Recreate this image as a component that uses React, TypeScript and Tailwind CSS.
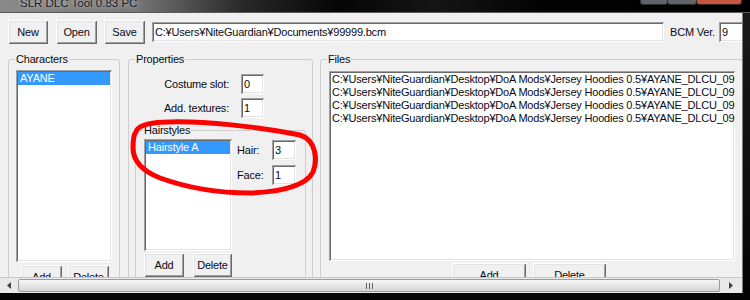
import React from 'react';

const raised =
    'shadow-[inset_1px_1px_0_#ffffff,inset_-1px_-1px_0_#696969,inset_2px_2px_0_#e3e3e3,inset_-2px_-2px_0_#a0a0a0]';
const sunken =
    'shadow-[inset_1px_1px_0_#a0a0a0,inset_-1px_-1px_0_#ffffff,inset_2px_2px_0_#696969,inset_-2px_-2px_0_#e3e3e3]';

const filePath =
    'C:¥Users¥NiteGuardian¥Desktop¥DoA Mods¥Jersey Hoodies 0.5¥AYANE_DLCU_099_COS_HAIR';

function Btn({ label, className }: { label: string; className: string }) {
    return (
        <div
            className={`${raised} ${className} h-[24px] shrink-0 flex items-center justify-center bg-[#f0f0f0]`}
        >
            {label}
        </div>
    );
}

function Field({ value, className }: { value: string; className: string }) {
    return (
        <div
            className={`${sunken} ${className} h-[20px] shrink-0 flex items-center pl-[3px] bg-white overflow-hidden whitespace-nowrap`}
        >
            {value}
        </div>
    );
}

function ListBox({
    className,
    children,
}: {
    className: string;
    children: React.ReactNode;
}) {
    return (
        <div className={`${sunken} ${className} shrink-0 p-[2px] bg-white overflow-hidden`}>
            {children}
        </div>
    );
}

function Selected({ label }: { label: string }) {
    return (
        <div className="h-[13px] leading-[13px] pl-[2px] bg-[#3399ff] text-white whitespace-nowrap">
            {label}
        </div>
    );
}

function TitleBar() {
    return (
        <div className="h-[13px] flex items-start border-b border-[#5a5a5a] bg-[linear-gradient(90deg,#8a8a8a_0%,#777777_18%,#2a2a2a_32%,#050505_45%,#151515_58%,#030303_72%,#000000_100%)]">
            <span className="ml-[20px] mt-[-3px] leading-[13px] text-[11.5px] tracking-normal text-[#1b1b2a] [text-shadow:0_0_4px_#d8d8d8]">
                SLR DLC Tool 0.83 PC
            </span>
            <div className="ml-auto mr-[8px] flex">
                <div className="w-[28px] h-[5px] border border-t-0 border-[#2c2c2c] rounded-b-[3px] bg-[#5f6369]" />
                <div className="w-[29px] h-[5px] border border-t-0 border-l-0 border-[#2c2c2c] rounded-b-[3px] bg-[#5f6369]" />
                <div className="w-[45px] h-[5px] border border-t-0 border-l-0 border-[#3a2520] rounded-b-[3px] bg-[#c4563f]" />
            </div>
        </div>
    );
}

function ScrollBar() {
    return (
        <div className="h-[16px] flex border-t border-[#c8c8c8] bg-[#e9e9e9]">
            <div className="w-[18px] flex items-center justify-center">
                <svg width="4" height="7" viewBox="0 0 4 7">
                    <path d="M4 0 L0 3.5 L4 7 Z" fill="#404040" />
                </svg>
            </div>
            <div className="w-[702px] mt-[1px] h-[13px] flex items-center justify-center rounded-[2px] border border-[#9b9b9b] bg-[linear-gradient(180deg,#f7f7f7,#e6e6e6_50%,#d4d4d4)]">
                <div className="flex gap-[2px]">
                    <div className="w-[1px] h-[6px] bg-[#5f5f5f]" />
                    <div className="w-[1px] h-[6px] bg-[#5f5f5f]" />
                    <div className="w-[1px] h-[6px] bg-[#5f5f5f]" />
                </div>
            </div>
            <div className="flex-1 flex items-center justify-center">
                <svg width="4" height="7" viewBox="0 0 4 7">
                    <path d="M0 0 L4 3.5 L0 7 Z" fill="#404040" />
                </svg>
            </div>
        </div>
    );
}

function App() {
    return (
        <div className="relative w-[750px] h-[300px] overflow-hidden bg-black text-[11px] leading-[13px] tracking-[-0.2px] text-[#0a0a14] font-['Liberation_Sans',Arial,sans-serif]">
            <TitleBar />

            <div className="flex h-[280px]">
                <div className="w-[743px] flex flex-col bg-[#f0f0f0] border-r border-[#7d7d7d]">
                    <div className="h-[264px] overflow-hidden">
                        <div className="flex items-center pt-[7px] pl-[8px]">
                            <Btn label="New" className="w-[40px]" />
                            <Btn label="Open" className="ml-[8px] w-[41px]" />
                            <Btn label="Save" className="ml-[7px] w-[41px]" />
                            <Field
                                value="C:¥Users¥NiteGuardian¥Documents¥99999.bcm"
                                className="ml-[7px] w-[512px]"
                            />
                            <span className="ml-[6px] w-[49px] shrink-0 whitespace-nowrap">
                                BCM Ver.
                            </span>
                            <Field value="9" className="w-[30px]" />
                        </div>

                        <div className="flex items-start mt-[9px] pl-[8px]">
                            <fieldset className="w-[112px] h-[240px] shrink-0 border border-[#cdcdcd] rounded-[3px]">
                                <legend className="ml-[6px] px-[1px] leading-[13px]">Characters</legend>
                                <div className="pl-[7px] pt-[4px]">
                                    <ListBox className="w-[96px] h-[192px]">
                                        <Selected label="AYANE" />
                                    </ListBox>
                                    <div className="flex gap-[6px] mt-[3px] pl-[5px]">
                                        <Btn label="Add" className="w-[41px]" />
                                        <Btn label="Delete" className="w-[41px]" />
                                    </div>
                                </div>
                            </fieldset>

                            <fieldset className="ml-[8px] w-[185px] h-[240px] shrink-0 border border-[#cdcdcd] rounded-[3px]">
                                <legend className="ml-[6px] px-[1px] leading-[13px]">Properties</legend>
                                <div className="pt-[8px]">
                                    <div className="flex items-center">
                                        <span className="w-[100px] text-right">Costume slot:</span>
                                        <Field value="0" className="ml-[12px] w-[23px]" />
                                    </div>
                                    <div className="flex items-center mt-[4px]">
                                        <span className="w-[100px] text-right">Add. textures:</span>
                                        <Field value="1" className="ml-[12px] w-[23px]" />
                                    </div>

                                    <fieldset className="ml-[6px] mt-[6px] w-[171px] h-[200px] border border-[#cdcdcd] rounded-[3px]">
                                        <legend className="ml-[7px] px-[1px] leading-[13px]">Hairstyles</legend>
                                        <div className="flex pl-[8px] pt-[2px]">
                                            <div className="flex flex-col">
                                                <ListBox className="w-[88px] h-[112px]">
                                                    <Selected label="Hairstyle A" />
                                                </ListBox>
                                                <div className="flex gap-[9px] mt-[2px]">
                                                    <Btn label="Add" className="w-[40px]" />
                                                    <Btn label="Delete" className="w-[39px]" />
                                                </div>
                                            </div>
                                            <div className="ml-[5px] pt-[1px] flex flex-col gap-[5px]">
                                                <div className="flex items-center">
                                                    <span className="w-[35px]">Hair:</span>
                                                    <Field value="3" className="w-[24px]" />
                                                </div>
                                                <div className="flex items-center">
                                                    <span className="w-[35px]">Face:</span>
                                                    <Field value="1" className="w-[24px]" />
                                                </div>
                                            </div>
                                        </div>
                                    </fieldset>
                                </div>
                            </fieldset>

                            <fieldset className="ml-[7px] w-[423px] h-[240px] shrink-0 border border-[#cdcdcd] rounded-[3px]">
                                <legend className="ml-[6px] px-[1px] leading-[13px]">Files</legend>
                                <div className="pl-[8px] pt-[5px]">
                                    <ListBox className="w-[406px] h-[190px]">
                                        <div className="pl-[1px] whitespace-nowrap">
                                            {[0, 1, 2, 3].map((i) => (
                                                <div key={i} className="h-[13px]">
                                                    {filePath}
                                                </div>
                                            ))}
                                        </div>
                                    </ListBox>
                                    <div className="flex gap-[7px] mt-[2px] ml-[123px]">
                                        <Btn label="Add" className="w-[74px]" />
                                        <Btn label="Delete" className="w-[73px]" />
                                    </div>
                                </div>
                            </fieldset>
                        </div>
                    </div>
                    <ScrollBar />
                </div>
                <div className="flex-1 bg-[linear-gradient(180deg,#1a1a1a,#050505)]" />
            </div>
            <div className="h-[7px] bg-[#050505]" />

            {/* red marker scribble around the hairstyle box */}
            <svg
                className="absolute inset-0 pointer-events-none"
                width="750"
                height="300"
                viewBox="0 0 750 300"
            >
                <path
                    d="M136 132 C138 123 160 121 190 122 C225 123 270 129 300 135 C316 140 318 160 313 172 C306 186 280 192 250 193 C215 193 185 187 160 178 C140 170 133 160 133 148 C133 140 134 134 136 132 Z"
                    fill="none"
                    stroke="#ff0000"
                    strokeWidth="5"
                    strokeLinejoin="round"
                />
            </svg>
        </div>
    );
}

export default App;
